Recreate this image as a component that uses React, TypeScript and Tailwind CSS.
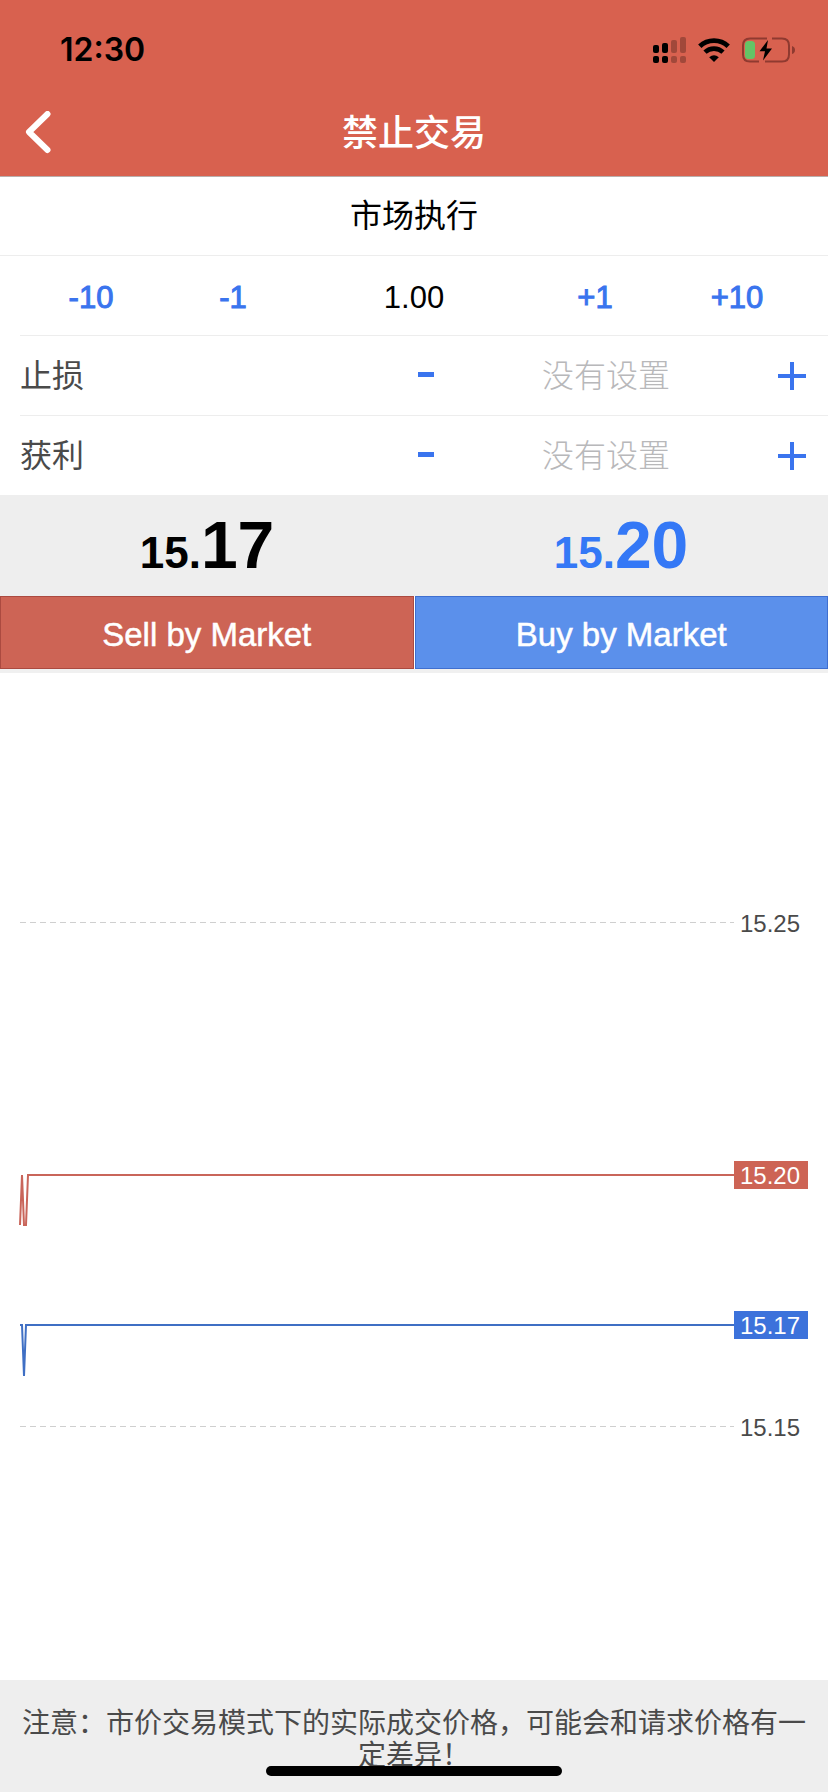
import { useState } from 'react';

const VOLUME_STEPS = [-10, -1, 1, 10];

function SignalIcon() {
	return (
		<svg viewBox="0 0 33 26" className="h-[26px] w-[33px]" fill="#000">
			<rect x="0" y="8" width="6" height="8" rx="2" />
			<rect x="9" y="6" width="6" height="10" rx="2" />
			<rect x="0" y="19" width="6" height="7" rx="2" />
			<rect x="9" y="19" width="6" height="7" rx="2" />
			<g opacity="0.25">
				<rect x="18" y="3" width="6" height="13" rx="2" />
				<rect x="27" y="0" width="6" height="16" rx="2" />
				<rect x="18" y="19" width="6" height="7" rx="2" />
				<rect x="27" y="19" width="6" height="7" rx="2" />
			</g>
		</svg>
	);
}

function WifiIcon() {
	return (
		<svg viewBox="0 0 32 24" className="h-6 w-8" fill="none" stroke="#000">
			<path d="M1.8 8.3 A20.5 20.5 0 0 1 30.2 8.3" strokeWidth="4.8" />
			<path d="M7 14.2 A13 13 0 0 1 25 14.2" strokeWidth="4.6" />
			<path d="M11.2 19.2 Q16 15.4 20.8 19.2 L16 24 Z" fill="#000" stroke="none" />
		</svg>
	);
}

function BatteryIcon() {
	return (
		<svg viewBox="0 0 54 26" className="h-[26px] w-[54px]">
			<g fill="none" stroke="#8f3a30" strokeWidth="2">
				<path d="M25 1.5 H8 Q1 1.5 1 8.5 V17.5 Q1 24.5 8 24.5 H17" />
				<path d="M30 1.5 H40 Q47 1.5 47 8.5 V17.5 Q47 24.5 40 24.5 H23" />
			</g>
			<path d="M50 9 Q53 10 53 13 Q53 16 50 17 Z" fill="#8f3a30" />
			<rect x="3" y="4" width="10" height="18" rx="3.5" fill="#65c466" />
			<path d="M26 3 L17.5 14.3 H23 L21 23.5 L30 11.5 H24.5 Z" fill="#000" />
		</svg>
	);
}

function MinusIcon() {
	return (
		<svg viewBox="0 0 16 28" className="h-7 w-4" fill="#3a74ee">
			<rect x="0" y="10" width="16" height="5" />
		</svg>
	);
}

function PlusIcon() {
	return (
		<svg viewBox="0 0 28 28" className="h-7 w-7" fill="#3a74ee">
			<rect x="0" y="12" width="28" height="4" />
			<rect x="12" y="0" width="4" height="28" />
		</svg>
	);
}

type LevelRowProps = {
	id: string;
	label: string;
};

function LevelRow({ id, label }: LevelRowProps) {
	const [level, setLevel] = useState('');
	const change = (delta: number) =>
		setLevel(((Number(level) || 15.17) + delta).toFixed(2));

	return (
		<div className="ml-5 box-content flex h-[79px] items-center border-b border-[#ededed] last:border-b-0">
			<label htmlFor={id} className="flex-1 text-[32px] text-[#4a4a4a]">
				{label}
			</label>
			<div className="flex w-[414px] items-center pr-[18px]">
				<button
					type="button"
					aria-label={`${label} -`}
					onClick={() => change(-0.01)}
					className="flex w-6 justify-center"
				>
					<MinusIcon />
				</button>
				<input
					id={id}
					value={level}
					onChange={(e) => setLevel(e.target.value)}
					placeholder="没有设置"
					className="min-w-0 flex-1 text-center text-[32px] font-light outline-none placeholder:text-[#b8b8ba]"
				/>
				<button
					type="button"
					aria-label={`${label} +`}
					onClick={() => change(0.01)}
					className="flex w-9 justify-center"
				>
					<PlusIcon />
				</button>
			</div>
		</div>
	);
}

type PriceProps = {
	whole: string;
	fraction: string;
	className: string;
};

function Price({ whole, fraction, className }: PriceProps) {
	return (
		<div
			className={`flex flex-1 items-baseline justify-center font-bold ${className}`}
		>
			<span className="text-[44px] leading-[100px]">{whole}.</span>
			<span className="text-[66px] leading-[100px]">{fraction}</span>
		</div>
	);
}

function TickChart() {
	return (
		<svg
			viewBox="0 0 828 1006"
			className="w-full font-['Liberation_Sans',sans-serif] text-[24px]"
			fill="none"
		>
			<g stroke="#cfcfcf" strokeDasharray="6 4">
				<path d="M20 249.5 H734" />
				<path d="M20 753.5 H734" />
			</g>
			<path
				d="M20 552 L22 502 L24 552 H26 L28 502 H734"
				stroke="#c9655a"
				strokeWidth="2"
			/>
			<path
				d="M20 652 H22 L24 703 L26 652 H734"
				stroke="#3f6fc4"
				strokeWidth="2"
			/>
			<rect x="734" y="488" width="74" height="28" fill="#cd6455" />
			<rect x="734" y="638" width="74" height="28" fill="#3c72db" />
			<g fill="#4a4a4a">
				<text x="740" y="259">15.25</text>
				<text x="740" y="763">15.15</text>
			</g>
			<g fill="#fff">
				<text x="740" y="511">15.20</text>
				<text x="740" y="661">15.17</text>
			</g>
		</svg>
	);
}

export default function App() {
	const [volume, setVolume] = useState('1.00');

	const stepButton = (step: number) => (
		<button
			key={step}
			type="button"
			onClick={() => setVolume((Number(volume) + step).toFixed(2))}
			className="text-[#3a74ee] [-webkit-text-stroke:1px_#3a74ee]"
		>
			{step > 0 ? `+${step}` : step}
		</button>
	);

	return (
		<div className="flex min-h-screen flex-col bg-white font-['Liberation_Sans','Noto_Sans_CJK_SC',sans-serif]">
			<header className="border-b border-[#b9aeac] bg-[#d8614f]">
				<div className="flex h-[100px] items-center justify-between pr-8 pl-[60px]">
					<time className="font-['Inter',sans-serif] text-[32px] font-semibold text-black">
						12:30
					</time>
					<div className="flex items-center gap-3">
						<SignalIcon />
						<WifiIcon />
						<BatteryIcon />
					</div>
				</div>
				<div className="grid h-[76px] grid-cols-[1fr_auto_1fr] items-center pb-2">
					<button type="button" aria-label="返回" className="ml-[25px] w-7">
						<svg
							viewBox="0 0 28 46"
							className="h-[46px] w-7"
							fill="none"
							stroke="#fff"
							strokeWidth="6"
							strokeLinecap="round"
							strokeLinejoin="round"
						>
							<path d="M22.5 3 L4 21 L22.5 39" />
						</svg>
					</button>
					<h1 className="text-[36px] leading-10 font-medium text-white">
						禁止交易
					</h1>
				</div>
			</header>

			<main className="flex flex-1 flex-col">
				<h2 className="box-content flex h-[78px] items-center justify-center border-b border-[#ededed] text-[32px] text-black">
					市场执行
				</h2>
				<div>
					<div className="ml-5 box-content grid h-[73px] grid-cols-[1fr_1fr_220px_1fr_1fr] items-center border-b border-[#ededed] pt-1.5 pr-5 text-[31px]">
						{VOLUME_STEPS.slice(0, 2).map(stepButton)}
						<input
							aria-label="手数"
							value={volume}
							onChange={(e) => setVolume(e.target.value)}
							className="min-w-0 text-center text-black outline-none"
						/>
						{VOLUME_STEPS.slice(2).map(stepButton)}
					</div>
					<LevelRow id="stop-loss" label="止损" />
					<LevelRow id="take-profit" label="获利" />
				</div>

				<div className="flex h-[101px] bg-[#eee]">
					<Price whole="15" fraction="17" className="text-black" />
					<Price whole="15" fraction="20" className="text-[#3478f6]" />
				</div>
				<div className="grid grid-cols-2 gap-px border-b-4 border-[#f0f0f0] text-[33px] text-white [-webkit-text-stroke:0.5px_#fff]">
					<button
						type="button"
						className="h-[73px] border border-[#ab4a40] bg-[#cd6455] pt-1"
					>
						Sell by Market
					</button>
					<button
						type="button"
						className="h-[73px] border border-[#3f6fd0] bg-[#5b90eb] pt-1"
					>
						Buy by Market
					</button>
				</div>

				<div className="flex-1">
					<TickChart />
				</div>
			</main>

			<footer className="relative h-28 bg-[#eee] px-[22px] pt-7">
				<p className="text-center text-[28px] leading-8 text-[#4a4a4a]">
					注意：市价交易模式下的实际成交价格，可能会和请求价格有一定差异！
				</p>
				<div className="absolute bottom-4 left-1/2 h-2.5 w-[296px] -translate-x-1/2 rounded-full bg-black" />
			</footer>
		</div>
	);
}
